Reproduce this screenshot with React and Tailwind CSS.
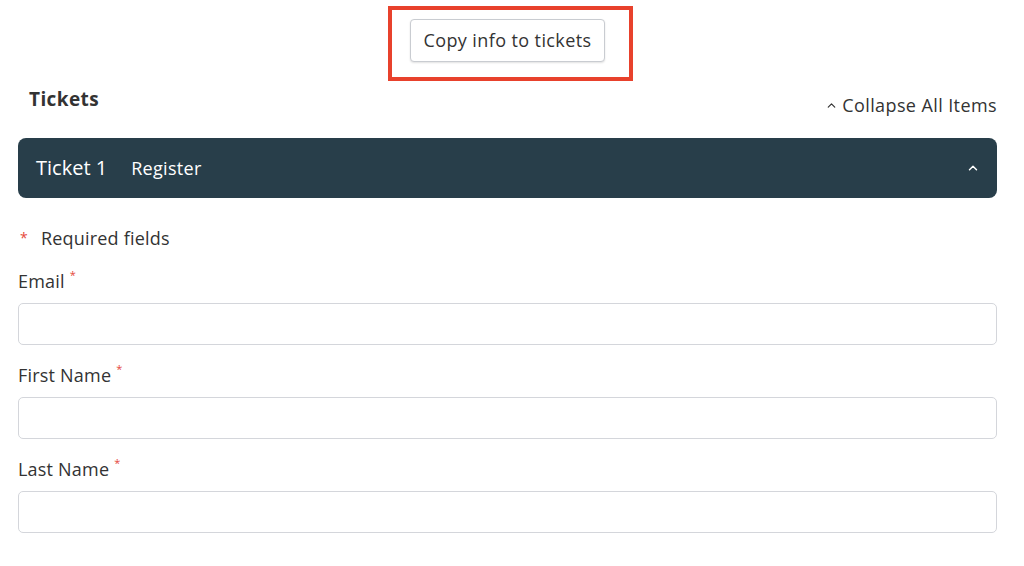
import { ChevronUp } from 'lucide-react';

function Field({ label }) {
  return (
    <div className="mt-[17px]">
      <div className="flex items-start text-[18px] leading-[26px] tracking-[0.2px] text-[#333]">
        <span>{label}</span>
        <span className="ml-[5px] text-[11px] leading-[14px] text-[#e5483b]">*</span>
      </div>
      <input
        type="text"
        className="mt-[9px] block h-[42px] w-full rounded-[5px] border border-[#d4d6db] bg-white outline-none"
      />
    </div>
  );
}

export default function App() {
  return (
    <div className="min-h-[566px] bg-white font-['Open_Sans',sans-serif] text-[#333]">
      <div className="w-[979px] ml-[18px]">
        <div className="flex justify-center pt-[6px]">
          <div className="ml-[6px] flex h-[75px] w-[245px] items-start justify-center border-[4px] border-[#e8412c] pt-[9px]">
            <button
              type="button"
              className="mr-[6px] h-[43px] w-[195px] rounded-[4px] border border-[#c9ccd1] bg-white text-[18px] tracking-[0.4px] text-[#333] shadow-[0_1px_2px_rgba(0,0,0,0.12)]"
            >
              Copy info to tickets
            </button>
          </div>
        </div>

        <div className="mt-[4px] flex items-end justify-between">
          <h2 className="ml-[11px] text-[19px] font-bold leading-[28px] tracking-[0.4px] text-[#333]">Tickets</h2>
          <button type="button" className="mb-[-6px] flex items-center gap-[4px] text-[18px] tracking-[0.4px] text-[#333]">
            <ChevronUp size={13} strokeWidth={2.2} />
            Collapse All Items
          </button>
        </div>

        <div className="mt-[25px] flex h-[60px] items-center rounded-[8px] bg-[#283e4a] pl-[18px] pr-[17px] text-white">
          <span className="text-[20px]">Ticket 1</span>
          <span className="ml-[24px] text-[18px] tracking-[0.3px]">Register</span>
          <ChevronUp className="ml-auto" size={14} strokeWidth={2.5} />
        </div>

        <div className="mt-[27px] flex items-center text-[18px] leading-[26px] tracking-[0.2px]">
          <span className="ml-[2px] text-[14px] text-[#e5483b]">*</span>
          <span className="ml-[13px]">Required fields</span>
        </div>

        <Field label="Email" />
        <Field label="First Name" />
        <Field label="Last Name" />
      </div>
    </div>
  );
}
